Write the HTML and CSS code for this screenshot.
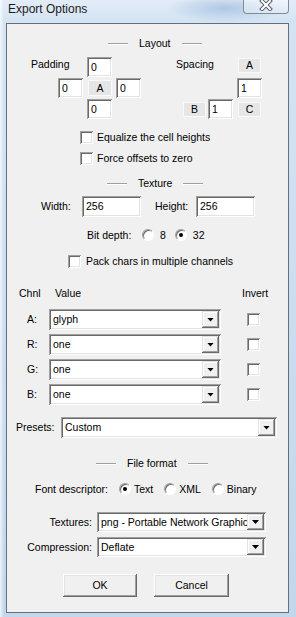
FILE: index.html
```html
<!DOCTYPE html>
<html lang="en">
<head>
	<meta charset="UTF-8">
	<meta name="viewport" content="width=device-width, initial-scale=1.0">
	<title>Export Options</title>
	<link rel="stylesheet" href="styles.css">
</head>
<body>

 <div class="window">
 	<div class="titlebar">
 		<span class="title">Export Options</span>
 		<span class="close">
 			<svg width="14" height="11" viewBox="0 0 14 11">
 				<path d="M3 1 L11 9 M11 1 L3 9" stroke="#5b5f66" stroke-width="4" stroke-linecap="square" fill="none"/>
 				<path d="M3 1 L11 9 M11 1 L3 9" stroke="#ffffff" stroke-width="2" stroke-linecap="square" fill="none"/>
 			</svg>
 		</span>
 	</div>

 	<div class="client">
 		<!-- layout -->
 		<div class="group-title layout-title">
 			<span class="rule"></span><span>Layout</span><span class="rule"></span>
 		</div>

 		<div class="layout-row">
 			<div class="pad-grid">
 				<span class="cap">Padding</span>
 				<span class="edit p-top">0</span>
 				<span class="edit p-left">0</span>
 				<span class="tag p-mid">A</span>
 				<span class="edit p-right">0</span>
 				<span class="edit p-bottom">0</span>
 			</div>
 			<div class="space-grid">
 				<span class="cap">Spacing</span>
 				<span class="tag s-a">A</span>
 				<span class="edit s-top">1</span>
 				<span class="tag s-b">B</span>
 				<span class="edit s-mid">1</span>
 				<span class="tag s-c">C</span>
 			</div>
 		</div>

 		<label class="check-row first"><span class="checkbox"></span>Equalize the cell heights</label>
 		<label class="check-row second"><span class="checkbox"></span>Force offsets to zero</label>

 		<!-- texture -->
 		<div class="group-title texture-title">
 			<span class="rule"></span><span>Texture</span><span class="rule"></span>
 		</div>

 		<div class="size-row">
 			<span class="size-label">Width:</span>
 			<span class="edit wide">256</span>
 			<span class="size-label height-label">Height:</span>
 			<span class="edit wide">256</span>
 		</div>

 		<div class="bits-row">
 			<span class="bits-label">Bit depth:</span>
 			<label class="opt bit-8"><span class="radio"></span>8</label>
 			<label class="opt"><span class="radio checked"></span>32</label>
 		</div>

 		<label class="check-row pack"><span class="checkbox"></span>Pack chars in multiple channels</label>

 		<div class="chnl-head">
 			<span class="h-chnl">Chnl</span>
 			<span class="h-value">Value</span>
 			<span>Invert</span>
 		</div>

 		<div class="chnl-list">
 			<span>A:</span>
 			<span class="combo"><span class="val">glyph</span><span class="drop"></span></span>
 			<span></span>
 			<span class="checkbox"></span>

 			<span>R:</span>
 			<span class="combo"><span class="val">one</span><span class="drop"></span></span>
 			<span></span>
 			<span class="checkbox"></span>

 			<span>G:</span>
 			<span class="combo"><span class="val">one</span><span class="drop"></span></span>
 			<span></span>
 			<span class="checkbox"></span>

 			<span>B:</span>
 			<span class="combo"><span class="val">one</span><span class="drop"></span></span>
 			<span></span>
 			<span class="checkbox"></span>
 		</div>

 		<div class="presets-row">
 			<span class="presets-label">Presets:</span>
 			<span class="combo presets"><span class="val">Custom</span><span class="drop"></span></span>
 		</div>

 		<!-- file format -->
 		<div class="group-title format-title">
 			<span class="rule"></span><span>File format</span><span class="rule"></span>
 		</div>

 		<div class="desc-row">
 			<span class="desc-label">Font descriptor:</span>
 			<label class="opt"><span class="radio checked"></span>Text</label>
 			<label class="opt"><span class="radio"></span>XML</label>
 			<label class="opt"><span class="radio"></span>Binary</label>
 		</div>

 		<div class="file-row textures">
 			<span class="file-label">Textures:</span>
 			<span class="combo short"><span class="val">png - Portable Network Graphic</span><span class="drop"></span></span>
 		</div>
 		<div class="file-row compression">
 			<span class="file-label">Compression:</span>
 			<span class="combo short"><span class="val">Deflate</span><span class="drop"></span></span>
 		</div>

 		<div class="buttons">
 			<span class="btn ok">OK</span>
 			<span class="btn cancel">Cancel</span>
 		</div>
 	</div>
 </div>

</body>
</html>
```

FILE: styles.css
```css
* {
	margin: 0;
	padding: 0;
	box-sizing: border-box;
}

body {
	font-family: "Liberation Sans", Arial, sans-serif;
	font-size: 10.5px;
	line-height: 13px;
	color: #000;
	overflow: hidden;
}

/*window frame*/
.window {
	width: 296px;
	height: 617px;
	display: flex;
	flex-direction: column;
	background:
		radial-gradient(ellipse 60px 14px at 225px 8px, rgba(120, 160, 205, 0.45), transparent),
		linear-gradient(90deg, rgba(255, 255, 255, 0.7) 0, rgba(255, 255, 255, 0) 4px),
		linear-gradient(180deg, #e3edf8 0, #d3e3f3 22px, #c2d7ec 100%);
}

.titlebar {
	height: 23px;
	display: flex;
	justify-content: space-between;
	align-items: flex-start;
}

.title {
	font-size: 12px;
	line-height: 14px;
	margin: 2px 0 0 8px;
	color: #1c1c1c;
}

.close {
	width: 46px;
	height: 14px;
	margin-right: 7px;
	border: 1px solid #838b95;
	border-top: none;
	border-radius: 0 0 4px 4px;
	background: linear-gradient(180deg, rgba(255, 255, 255, 0.5), rgba(225, 235, 245, 0.6));
	display: flex;
	justify-content: center;
	align-items: flex-start;
}

.client {
	margin: 0 7px 0 6px;
	height: 590px;
	border: 1px solid #66707b;
	background-color: #f0f0f0;
}

/*group titles*/
.group-title {
	display: flex;
	align-items: center;
	height: 13px;
	margin-top: 12px;
}

.group-title .rule {
	width: 20px;
	border-top: 1px solid #a0a0a0;
	border-bottom: 1px solid #fff;
}

.group-title span:nth-child(2) {
	margin: 0 11px;
}

.layout-title {
	margin-top: 13px;
	padding-left: 101px;
}

.texture-title {
	padding-left: 100px;
}

.format-title {
	margin-top: 19px;
	padding-left: 89px;
}

/*sunken controls*/
.edit, .combo, .checkbox {
	background-color: #fff;
	box-shadow: inset 1px 1px #a0a0a0, inset -1px -1px #fff, inset 2px 2px #696969, inset -2px -2px #e3e3e3;
}

.edit {
	width: 25px;
	height: 20px;
	padding-left: 4px;
	display: flex;
	align-items: center;
}

.tag {
	width: 23px;
	height: 15px;
	background-color: #e6e6e6;
	border: 1px solid #f9f9f9;
	display: flex;
	justify-content: center;
	align-items: center;
}

.checkbox {
	width: 13px;
	height: 13px;
	flex: none;
}

.radio {
	width: 12px;
	height: 12px;
	flex: none;
	border-radius: 50%;
	background-color: #fff;
	border: 1px solid;
	border-color: #a0a0a0 #fff #fff #a0a0a0;
	box-shadow: inset 1px 1px #696969;
	display: flex;
	justify-content: center;
	align-items: center;
}

.radio.checked::after {
	content: "";
	width: 4px;
	height: 4px;
	border-radius: 50%;
	background-color: #000;
}

/*layout block*/
.layout-row {
	display: flex;
	gap: 35px;
	margin-top: 7px;
	padding-left: 24px;
}

.pad-grid, .space-grid {
	display: grid;
	grid-template-rows: 20px 20px 20px;
	row-gap: 1px;
}

.pad-grid {
	grid-template-columns: 27px 25px 4px 25px 4px 25px;
}

.space-grid {
	grid-template-columns: 7px 23px 2px 25px 4px 25px;
}

.cap {
	grid-row: 1;
	grid-column: 1 / 4;
	margin-top: 1px;
}

.space-grid .cap {
	grid-column: 1 / 5;
}

.p-top { grid-row: 1; grid-column: 4; }
.p-left { grid-row: 2; grid-column: 2; }
.p-mid { grid-row: 2; grid-column: 4; width: 24px; height: 16px; align-self: center; justify-self: end; }
.p-right { grid-row: 2; grid-column: 6; }
.p-bottom { grid-row: 3; grid-column: 4; }

.s-a { grid-row: 1; grid-column: 6; margin-top: 1px; justify-self: center; }
.s-top { grid-row: 2; grid-column: 6; }
.s-b { grid-row: 3; grid-column: 2; align-self: center; }
.s-mid { grid-row: 3; grid-column: 4; }
.s-c { grid-row: 3; grid-column: 6; align-self: center; justify-self: center; }

/*checkbox rows*/
.check-row {
	display: flex;
	align-items: center;
	gap: 4px;
	height: 13px;
	padding-left: 73px;
}

.check-row.first {
	margin-top: 12px;
}

.check-row.second {
	margin-top: 8px;
}

.check-row.pack {
	margin-top: 13px;
	padding-left: 61px;
	gap: 5px;
}

/*texture*/
.size-row {
	display: flex;
	align-items: center;
	height: 21px;
	margin-top: 6px;
	padding-left: 34px;
}

.size-label {
	width: 41px;
}

.height-label {
	margin-left: 14px;
}

.edit.wide {
	width: 59px;
	height: 21px;
}

.bits-row, .desc-row {
	display: flex;
	align-items: center;
	height: 14px;
	margin-top: 11px;
	padding-left: 80px;
}

.bits-label {
	width: 55px;
}

.opt {
	display: flex;
	align-items: center;
	gap: 6px;
}

.bit-8 {
	margin-right: 9px;
}

/*channels*/
.chnl-head {
	display: flex;
	height: 13px;
	margin-top: 19px;
	padding-left: 12px;
}

.h-chnl {
	width: 36px;
}

.h-value {
	width: 187px;
}

.chnl-list {
	display: grid;
	grid-template-columns: 22px 172px 26px 13px;
	grid-auto-rows: 21px;
	row-gap: 4px;
	align-items: center;
	margin-top: 9px;
	padding-left: 20px;
}

.combo {
	display: flex;
	height: 21px;
	padding: 2px;
}

.combo .val {
	flex: 1;
	padding-left: 2px;
	overflow: hidden;
	white-space: nowrap;
	display: flex;
	align-items: center;
}

.combo .drop {
	width: 17px;
	flex: none;
	background-color: #f0f0f0;
	box-shadow: inset -1px -1px #696969, inset 1px 1px #e3e3e3, inset -2px -2px #a0a0a0, inset 2px 2px #fff;
	display: flex;
	justify-content: center;
	align-items: center;
}

.combo .drop::after {
	content: "";
	width: 7px;
	height: 4px;
	background-color: #000;
	clip-path: polygon(0 0, 100% 0, 50% 100%);
}

.presets-row {
	display: flex;
	align-items: center;
	margin-top: 12px;
	padding-left: 9px;
}

.presets-label {
	width: 45px;
}

.combo.presets {
	width: 216px;
}

/*file format*/
.desc-row {
	margin-top: 12px;
	padding-left: 28px;
}

.desc-label {
	width: 84px;
}

.desc-row .opt {
	gap: 3px;
	margin-right: 11px;
}

.file-row {
	display: flex;
	align-items: center;
	gap: 5px;
}

.file-row.textures {
	margin-top: 16px;
}

.file-row.compression {
	margin-top: 5px;
}

.file-label {
	width: 85px;
	text-align: right;
}

.combo.short {
	width: 169px;
	height: 20px;
}

/*buttons*/
.buttons {
	display: flex;
	gap: 17px;
	margin-top: 17px;
	padding-left: 56px;
}

.btn {
	width: 74px;
	height: 23px;
	background-color: #f0f0f0;
	box-shadow: inset -1px -1px #696969, inset 1px 1px #fff, inset -2px -2px #a0a0a0, inset 2px 2px #e3e3e3;
	display: flex;
	justify-content: center;
	align-items: center;
}

.btn.cancel {
	width: 75px;
}
```
